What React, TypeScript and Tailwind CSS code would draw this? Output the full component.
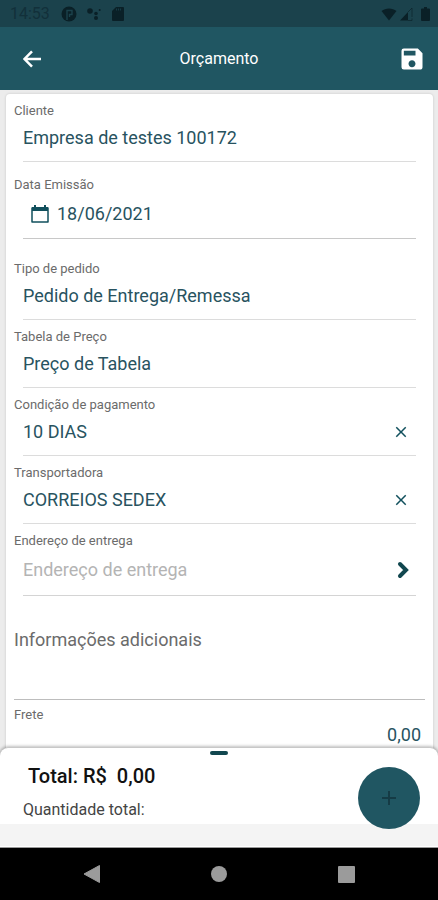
import type { ReactNode } from "react";
import { MdSave, MdClose, MdAdd } from "react-icons/md";

type FieldProps = {
  id: string;
  label: string;
  value?: string;
  placeholder?: string;
  className?: string;
  rowClassName?: string;
  before?: ReactNode;
  after?: ReactNode;
};

function Field({
  id,
  label,
  value,
  placeholder,
  className = "pt-[9px]",
  rowClassName = "h-[43px] border-[#dcdcdc]",
  before,
  after,
}: FieldProps) {
  return (
    <div className={className}>
      <label htmlFor={id} className="block px-2 text-[13px] leading-4 text-[#6b6b6b]">
        {label}
      </label>
      <div className={`mx-[17px] flex items-center border-b pb-1 ${rowClassName}`}>
        {before}
        <input
          id={id}
          type="text"
          defaultValue={value}
          placeholder={placeholder}
          className="min-w-0 flex-1 bg-transparent text-lg text-[#28535f] outline-none placeholder:text-[#b4b4b4]"
        />
        {after}
      </div>
    </div>
  );
}

function ClearButton({ label }: { label: string }) {
  return (
    <button type="button" aria-label={label} className="mr-[6px] text-[#11505d]">
      <MdClose size={18} />
    </button>
  );
}

function StatusBar() {
  return (
    <div className="flex h-[27px] items-center bg-[#1b424c] pt-px pl-[10px] pr-2 text-[#0a2027]">
      <span className="w-[51px] text-base leading-5 text-[#12303a]">14:53</span>
      <svg width="16" height="16" viewBox="0 0 16 16" aria-hidden="true">
        <circle cx="8" cy="8" r="7.5" fill="currentColor" />
        <path d="M6 14V4.500h5V8.500H8.500V11" fill="none" stroke="#1b424c" strokeWidth="1.400" />
      </svg>
      <svg width="14" height="14" viewBox="0 0 14 14" className="ml-[10px]" aria-hidden="true">
        <circle cx="3" cy="4" r="2.8" fill="currentColor" />
        <circle cx="9" cy="6.500" r="1.800" fill="currentColor" />
        <circle cx="9" cy="11" r="2" fill="currentColor" />
        <circle cx="12.700" cy="3" r="1" fill="currentColor" />
      </svg>
      <svg width="12" height="14" viewBox="0 0 12 14" className="ml-[11px]" aria-hidden="true">
        <path d="M4 0h7a1 1 0 0 1 1 1v12a1 1 0 0 1-1 1H1a1 1 0 0 1-1-1V4z" fill="currentColor" />
        <path d="M4.500 1.500v2M6.500 1.500v2M8.500 1.500v2" stroke="#1b424c" strokeWidth="0.800" />
      </svg>
      <div className="ml-auto flex items-center">
        <svg width="16" height="14" viewBox="0 0 16 14" aria-hidden="true">
          <path d="M8 13.500.5 4C4.500.5 11.500.5 15.500 4z" fill="currentColor" />
        </svg>
        <svg width="13" height="14" viewBox="0 0 13 14" className="ml-[3px]" aria-hidden="true">
          <path d="M0 13.500 8 5v8.500z" fill="currentColor" />
          <path d="M8 5l4-4v9M12 11.500v2H8" fill="none" stroke="currentColor" opacity="0.6" />
        </svg>
        <svg width="9" height="14" viewBox="0 0 9 14" className="ml-2" aria-hidden="true">
          <path d="M3 0h3v1.500h2a1 1 0 0 1 1 1V13a1 1 0 0 1-1 1H1a1 1 0 0 1-1-1V2.500a1 1 0 0 1 1-1h2z" fill="currentColor" />
        </svg>
      </div>
    </div>
  );
}

function Header() {
  return (
    <header className="grid h-[63px] grid-cols-[1fr_auto_1fr] items-center bg-[#205662] px-3 text-white">
      <button type="button" aria-label="Voltar" className="ml-[11px] justify-self-start">
        <svg width="18" height="18" viewBox="0 0 18 18" className="block">
          <path d="M9 1.300 1.500 9 9 16.700M2 9h16" fill="none" stroke="currentColor" strokeWidth="2.500" />
        </svg>
      </button>
      <h1 className="text-base">Orçamento</h1>
      <button type="button" aria-label="Salvar" className="justify-self-end">
        <MdSave size={28} />
      </button>
    </header>
  );
}

function Summary() {
  return (
    <section className="relative rounded-t-lg bg-white shadow-[0_-1px_3px_1px_rgba(0,0,0,0.25)]">
      <div className="flex justify-center pt-[3px]">
        <span className="h-1 w-[18px] rounded-sm bg-[#11474f]" />
      </div>
      <p className="whitespace-pre pl-7 pt-[9px] text-xl leading-6 font-medium text-[#111]">
        {"Total: R$  0,00"}
      </p>
      <p className="pl-[23px] pt-3 pb-1 text-base leading-5 text-[#444]">Quantidade total:</p>
      <div className="h-[22px] bg-[#f4f4f4]" />
      <div className="h-[2px] border-b border-[#999] bg-white" />
      <button
        type="button"
        aria-label="Adicionar"
        className="absolute right-[18px] top-[19px] flex size-[62px] items-center justify-center rounded-full bg-[#205662] text-[#153b45]"
      >
        <MdAdd size={24} />
      </button>
    </section>
  );
}

function SystemNav() {
  return (
    <nav className="flex h-[52px] items-center justify-around bg-black px-7 text-[#9b9b9b]">
      <button type="button" aria-label="Voltar">
        <svg width="18" height="20" viewBox="0 0 18 20">
          <path d="M16.500 1.500v17L1 10z" fill="currentColor" stroke="currentColor" strokeLinejoin="round" />
        </svg>
      </button>
      <button type="button" aria-label="Início" className="size-4 rounded-full bg-[#9b9b9b]" />
      <button type="button" aria-label="Recentes" className="size-[17px] rounded-[1px] bg-[#9b9b9b]" />
    </nav>
  );
}

export default function App() {
  return (
    <div className="flex h-screen flex-col bg-[#ececec] font-[Roboto,sans-serif]">
      <StatusBar />
      <Header />
      <main className="min-h-0 flex-1 overflow-hidden pt-1 pr-[5px] pl-[6px]">
        <form className="rounded-t-sm bg-white pb-4 shadow-[0_0_2px_1px_rgba(0,0,0,0.08)]">
          <Field id="cliente" label="Cliente" value="Empresa de testes 100172" />
          <Field
            id="emissao"
            label="Data Emissão"
            value="18/06/2021"
            className="pt-[15px]"
            rowClassName="h-[46px] border-[#c8c8c8]"
            before={
              <svg width="18" height="18" viewBox="0 0 18 18" className="mr-2 ml-2 shrink-0" aria-hidden="true">
                <path d="M1 3h16v14H1z" fill="none" stroke="#11505d" strokeWidth="1.500" strokeLinejoin="round" />
                <path d="M1 2h16v4H1zM3 0h2v3H3zM13 0h2v3h-2z" fill="#11505d" />
              </svg>
            }
          />
          <Field
            id="tipo"
            label="Tipo de pedido"
            value="Pedido de Entrega/Remessa"
            className="pt-[22px]"
          />
          <Field id="tabela" label="Tabela de Preço" value="Preço de Tabela" />
          <Field
            id="pagamento"
            label="Condição de pagamento"
            value="10 DIAS"
            after={<ClearButton label="Limpar condição de pagamento" />}
          />
          <Field
            id="transportadora"
            label="Transportadora"
            value="CORREIOS SEDEX"
            after={<ClearButton label="Limpar transportadora" />}
          />
          <Field
            id="endereco"
            label="Endereço de entrega"
            placeholder="Endereço de entrega"
            rowClassName="h-[47px] border-[#d4d4d4]"
            after={
              <button type="button" aria-label="Escolher endereço" className="mr-[7px]">
                <svg width="12" height="18" viewBox="0 0 12 18">
                  <path d="M3 3l6 6-6 6" fill="none" stroke="#11474f" strokeWidth="4" strokeLinecap="round" />
                </svg>
              </button>
            }
          />
          <div className="px-2 pt-8">
            <textarea
              aria-label="Informações adicionais"
              placeholder="Informações adicionais"
              className="block h-[72px] w-full resize-none border-b border-[#bdbdbd] text-lg leading-6 outline-none placeholder:text-[#6b6b6b]"
            />
          </div>
          <div className="px-2 pt-[7px]">
            <label htmlFor="frete" className="block text-[13px] leading-4 text-[#6b6b6b]">
              Frete
            </label>
            <input
              id="frete"
              type="text"
              defaultValue="0,00"
              className="block h-6 w-full pr-1 text-right text-lg text-[#28535f] outline-none"
            />
          </div>
        </form>
      </main>
      <Summary />
      <SystemNav />
    </div>
  );
}
